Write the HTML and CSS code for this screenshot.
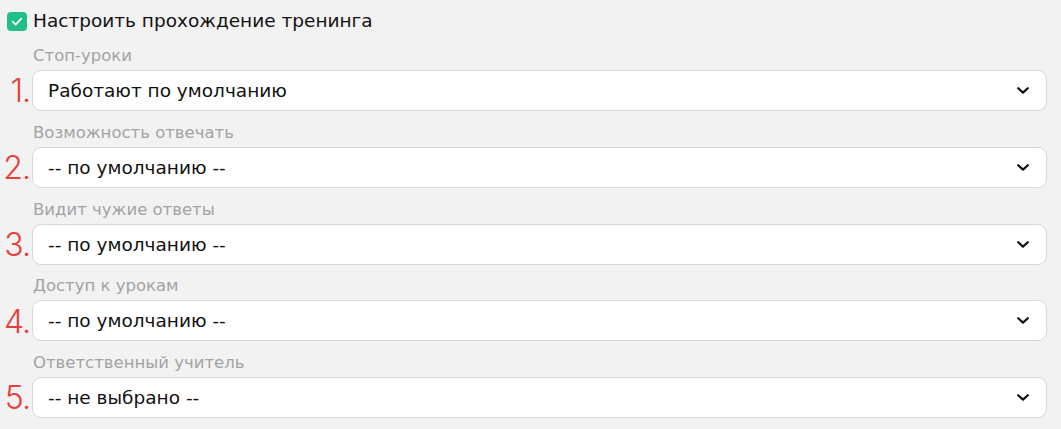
FILE: index.html
```html
<!DOCTYPE html>
<html lang="ru">
<head>
<meta charset="utf-8">
<title>Настроить прохождение тренинга</title>
<link rel="stylesheet" href="styles.css">
</head>
<body>
<div class="panel">
  <label class="head">
    <span class="check">
      <svg viewBox="0 0 20 20" width="20" height="19"><path d="M5.5 10.2l3 3 6-6.2" fill="none" stroke="#fff" stroke-width="1.8" stroke-linecap="round" stroke-linejoin="round"/></svg>
    </span>
    <span class="head-text">Настроить прохождение тренинга</span>
  </label>
  <div class="fields">
    <div class="field">
      <div class="label">Стоп-уроки</div>
      <div class="control"><span class="num">1.</span><div class="select"><span class="value">Работают по умолчанию</span><svg class="chev" viewBox="0 0 12 7" width="12" height="7"><path d="M1.2 1.2L6 5.6l4.8-4.4" fill="none" stroke="#111" stroke-width="2.2" stroke-linecap="round" stroke-linejoin="round"/></svg></div></div>
    </div>
    <div class="field">
      <div class="label">Возможность отвечать</div>
      <div class="control"><span class="num">2.</span><div class="select"><span class="value">-- по умолчанию --</span><svg class="chev" viewBox="0 0 12 7" width="12" height="7"><path d="M1.2 1.2L6 5.6l4.8-4.4" fill="none" stroke="#111" stroke-width="2.2" stroke-linecap="round" stroke-linejoin="round"/></svg></div></div>
    </div>
    <div class="field">
      <div class="label">Видит чужие ответы</div>
      <div class="control"><span class="num">3.</span><div class="select"><span class="value">-- по умолчанию --</span><svg class="chev" viewBox="0 0 12 7" width="12" height="7"><path d="M1.2 1.2L6 5.6l4.8-4.4" fill="none" stroke="#111" stroke-width="2.2" stroke-linecap="round" stroke-linejoin="round"/></svg></div></div>
    </div>
    <div class="field">
      <div class="label">Доступ к урокам</div>
      <div class="control"><span class="num">4.</span><div class="select"><span class="value">-- по умолчанию --</span><svg class="chev" viewBox="0 0 12 7" width="12" height="7"><path d="M1.2 1.2L6 5.6l4.8-4.4" fill="none" stroke="#111" stroke-width="2.2" stroke-linecap="round" stroke-linejoin="round"/></svg></div></div>
    </div>
    <div class="field">
      <div class="label">Ответственный учитель</div>
      <div class="control"><span class="num">5.</span><div class="select"><span class="value">-- не выбрано --</span><svg class="chev" viewBox="0 0 12 7" width="12" height="7"><path d="M1.2 1.2L6 5.6l4.8-4.4" fill="none" stroke="#111" stroke-width="2.2" stroke-linecap="round" stroke-linejoin="round"/></svg></div></div>
    </div>
  </div>
</div>
</body>
</html>
```
FILE: styles.css
```css
html, body {
  margin: 0;
  padding: 0;
  background: #f2f2f2;
}
body {
  font-family: "DejaVu Sans", "Noto Sans", "Liberation Sans", sans-serif;
  color: #111;
}
.panel {
  padding: 9px 14px 0 7px;
}
.head {
  display: flex;
  align-items: center;
  gap: 6px;
  height: 24px;
}
.check {
  width: 20px;
  height: 19px;
  border-radius: 4px;
  background: #22bf8c;
  display: flex;
  align-items: center;
  justify-content: center;
  margin-top: 1px;
}
.head-text {
  font-size: 18.5px;
  line-height: 24px;
  color: #111;
}
.fields {
  display: flex;
  flex-direction: column;
  gap: 11.75px;
  padding-left: 25px;
  margin-top: 13px;
}
.label {
  font-size: 16.5px;
  line-height: 20px;
  color: #a3a3a3;
  padding-left: 1px;
  margin-bottom: 4px;
}
.control {
  position: relative;
}
.num {
  position: absolute;
  right: 100%;
  margin-right: 2px;
  bottom: 3.6px;
  font-family: Inter, "Liberation Sans", sans-serif;
  font-weight: 300;
  font-size: 32px;
  line-height: 32px;
  color: #e6403a;
  letter-spacing: -1px;
}
.select {
  height: 41px;
  box-sizing: border-box;
  border: 1px solid #d8d8d8;
  border-radius: 9px;
  background: #fff;
  display: flex;
  align-items: center;
  justify-content: space-between;
  padding: 0 17px 0 15px;
}
.value {
  font-size: 18.5px;
  color: #111;
}
.chev {
  display: block;
}
```
